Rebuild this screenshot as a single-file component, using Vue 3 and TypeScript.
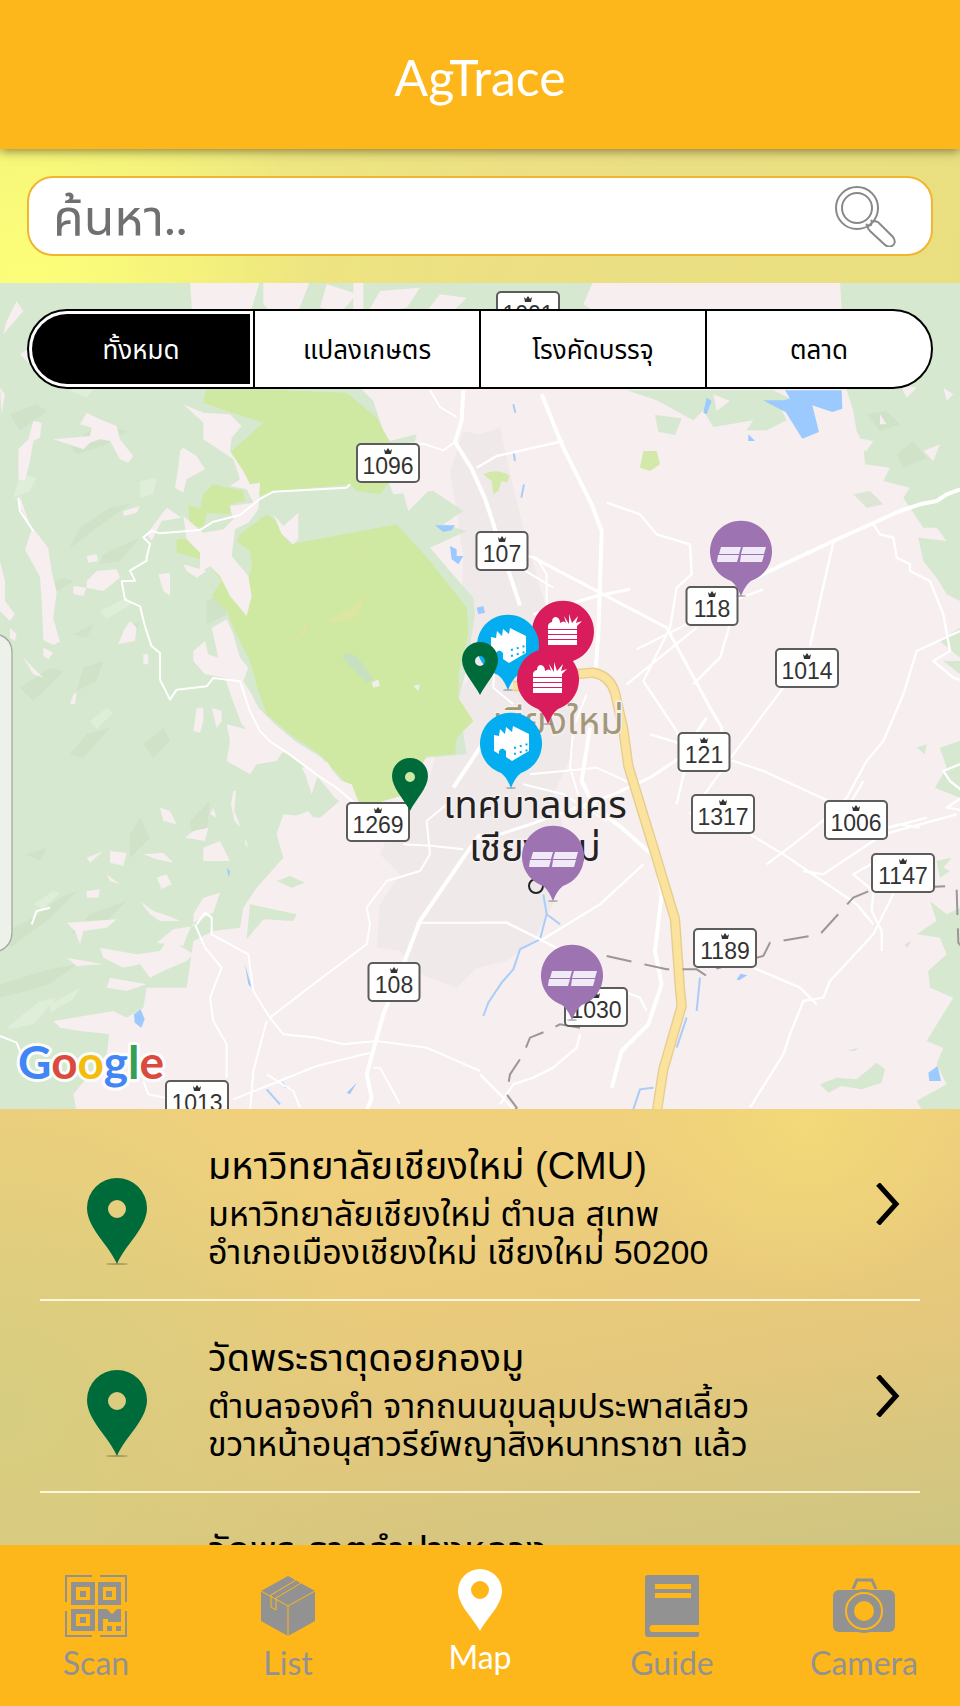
<script setup lang="ts">
import { ref } from 'vue'

type PinKind = 'market' | 'factory' | 'place' | 'farm'

interface Shield { code: string; x: number; y: number }
interface Pin { kind: PinKind; x: number; y: number }
interface Place { id: number; name: string; lines: string[] }

const query = ref('')
const filters = ['ทั้งหมด', 'แปลงเกษตร', 'โรงคัดบรรจุ', 'ตลาด']
const activeFilter = ref(filters[0])

const shields: Shield[] = [
  { code: '1001', x: 528, y: 310 },
  { code: '1096', x: 388, y: 462 },
  { code: '107', x: 502, y: 550 },
  { code: '118', x: 712, y: 605 },
  { code: '1014', x: 807, y: 667 },
  { code: '121', x: 704, y: 751 },
  { code: '1317', x: 723, y: 813 },
  { code: '1006', x: 856, y: 819 },
  { code: '1147', x: 903, y: 872 },
  { code: '1189', x: 725, y: 947 },
  { code: '1030', x: 596, y: 1006 },
  { code: '1269', x: 378, y: 821 },
  { code: '108', x: 394, y: 981 },
  { code: '1013', x: 197, y: 1099 },
]

const pins: Pin[] = [
  { kind: 'farm', x: 741, y: 551 },
  { kind: 'market', x: 563, y: 631 },
  { kind: 'factory', x: 508, y: 645 },
  { kind: 'place', x: 480, y: 660 },
  { kind: 'market', x: 548, y: 679 },
  { kind: 'factory', x: 511, y: 743 },
  { kind: 'place', x: 410, y: 776 },
  { kind: 'farm', x: 553, y: 856 },
  { kind: 'farm', x: 572, y: 975 },
]

const places: Place[] = [
  { id: 1, name: 'มหาวิทยาลัยเชียงใหม่ (CMU)', lines: ['มหาวิทยาลัยเชียงใหม่ ตำบล สุเทพ', 'อำเภอเมืองเชียงใหม่ เชียงใหม่ 50200'] },
  { id: 2, name: 'วัดพระธาตุดอยกองมู', lines: ['ตำบลจองคำ จากถนนขุนลุมประพาสเลี้ยว', 'ขวาหน้าอนุสาวรีย์พญาสิงหนาทราชา แล้ว'] },
  { id: 3, name: 'วัดพระธาตุลำปางหลวง', lines: [] },
]

const tabs = ['Scan', 'List', 'Map', 'Guide', 'Camera']
const activeTab = ref('Map')

const shieldWidth = (code: string) => (code.length === 4 ? 62 : 51)
</script>

<template>
  <div class="app">
    <header class="header"><h1>AgTrace</h1></header>

    <form class="search" @submit.prevent>
      <div class="search-box">
        <input v-model="query" type="text" placeholder="ค้นหา.." aria-label="ค้นหา" />
        <button type="submit" aria-label="ค้นหา">
          <svg viewBox="0 0 62 62" fill="none" stroke="#888" stroke-width="2">
            <circle cx="23" cy="23" r="21" />
            <circle cx="23" cy="23" r="15" />
            <path d="M34 41l3-1 1-3 3-1 3 1 15 15q4 6-1 9-4 2-8-2L36 46q-3-3-2-5zM34 41l-2-2M38 37l-1-2" />
          </svg>
        </button>
      </div>
    </form>

    <main class="map">
      <svg class="canvas" viewBox="0 282 960 826" preserveAspectRatio="xMidYMid slice" role="img" aria-label="แผนที่เชียงใหม่">
        <defs>
          <symbol id="balloon" viewBox="-31 -31 62 78" overflow="visible">
            <ellipse cx="0" cy="44" rx="5" ry="1" fill="#777" opacity=".5" />
            <path d="M0 44C-3 37-5 33-10 29A31 31 0 1 1 10 29C5 33 3 37 0 44z" />
          </symbol>
        </defs>
        <rect y="282" width="960" height="828" fill="#f6eeef" />
        <g transform="scale(.33333)">
          <!-- built-up area -->
          <path fill="#f0e9ea" d="M1390 1290l50 10 60-20 40 180 30 120 50 180 40 120 60 150 0 220-60 130 40 130-40 200-60 110-80 60-90 20-60 60-110-40-60-70-70-10 10-130 60-90-60-60 60-140 80-60 70-250 60-80-30-160 10-200-20-140-20-120z" />
          <!-- forest -->
          <path fill="#d6e8cf" d="M0 840H1060V1140L1120 1200 1150 1290 1170 1320 1250 1300 1240 1340 1150 1400 1180 1480 1300 1470 1390 1530 1330 1570 1400 1590 1290 1640 1350 1710 1420 1790 1425 1840 1400 2000 1375 2100 1400 2260 1280 2270 1080 2390 1030 2390 960 2450 850 2440 830 2500 850 2570 770 2660 730 2720 720 2780 640 2790 580 2820 560 2960 440 2960 430 3020 330 3080 320 3160 220 3280 230 3335H0z" />
          <path fill="#d6e8cf" d="M750 2710l140 30-10 20-90-5-50 60zM830 2640l40-15 45 20-40 15z" />
          <path fill="#d6e8cf" d="M1090 840h690l-30 70 60 40-110 40-610-20z" />
          <path fill="#d6e8cf" d="M1880 1168h440l60 30-40 20 20 40-60 30-60 0 20-30-120 20-30-50-30 30-110-60z" />
          <path fill="#d6e8cf" d="M1965 1242l80 10-20 50-50-10z" />
          <g transform="translate(1440 1140)" fill="#d6e8cf">
            <path d="M1080-300H1440V660L1400 640 1370 590 1330 540 1315 470 1400 480 1370 440 1330 440 1270 350 1290 320 1210 300 1230 260 1155 250 1150 190 1130 150 1120 90 1100 28z" />
            <path d="M1440 740l-60 40 60 50zM1440 840l-50 0 50 40z" />
          </g>
          <g transform="translate(1440 2220)" fill="#d6e8cf">
            <path d="M1440 0L1380 20 1400 80 1365 140 1440 170zM1440 500L1400 520 1350 480 1370 540 1310 580 1380 590 1400 640 1345 690 1350 740 1420 770 1340 900 1390 920 1370 970 1400 1030 1310 1080 1330 1115H1440zM1370 360l45-10-25 30 20 10-30 20zM1020 1030l50-20 60 5 60-50 25 20-10 40-60 20-60-10-40 20zM1310 20l30-10-5 30zM1275 610l20-10-15 20zM1100 930l35-10-10 10z" />
          </g>
          <!-- terrain shade -->
          <g fill="#cbdfc5" opacity=".6">
            <path d="M30 1240l80-30 30 20-80 60zM210 1330l90-60 80 20-60 40-90 30zM240 1580l90-60 60-10-100 70-80 60zM310 1660l110-50-60 70-60 10zM60 2060l90-60 40 10-90 90zM250 2000l60-20-20 60-60 30zM210 2260l50-60 70-20-80 90zM430 2230l60-50 20 40-50 50zM30 2840l110-80 90-90-50 20-80 60-80 40zM0 2990l150-40 80-60-80 15-150 45zM210 2800l60-60 110-40-60 60zM390 2500l30-50 30 60-60 60zM570 2460l60-60-10 90-40 30zM620 1800l50-20 10 60-60 30zM2600 1240l60-10 40 40-60 20zM2690 1360l50-40 40 50-70 30zM2560 1480l50-10 40 40-50 10zM130 1760l60-30 30 10-60 40zM360 1900l60-40-20 60zM80 2560l60-20-20 40zM220 1900l60-30-20 40z" />
          </g>
          <g fill="#e1efda" opacity=".8">
            <path d="M60 1420l50 10-20 40-50 20zM420 1440l50-10-10 50-40 10zM300 1830l80-40 20 15-80 50zM210 1170l40-30 60-10-50 60zM270 2160l50-40 20 15-50 50zM20 3080l100-80 50-10-70 80-70 15zM150 3010l90-50-20 35-70 40zM100 2710l60-40 20 5-50 50z" />
          </g>
          <!-- clearings -->
          <g fill="#f6eeef">
            <path d="M100 1260l25 5-5 45-20 10-10 60-15 60-20-5 0-90 30-30zM240 1270l20-35 40 20 50 20 10 40 40 50-15 20-25-10-30-55-30-5-30 10-20 20-90-30 110-10 5-25zM65 1487l-10 20 40 80-20 60 45 80 5 80 5 110 30 15 20-10-20-70 10-80-15-60-10-70-30-40-25-30-30-85zM260 1740l30-30 60-5 10 25-50 40-50-10zM540 1350l10-10 40 25 25 40-55 30-10 40-25-15 10-60zM475 1720l35-5v70l-20-15zM390 1860l20 20-5 40-50 10 15-40z" />
            <path d="M440 1600l60-80 45 30-60 10-30 60zM370 1530l50-15-10 20-40 10zM260 1665l30-5 5 20-30 5zM220 1755l40 5-10 25-30-5zM550 1690l70 20-30 20-30-20z" />
            <path d="M0 1680l15 60v60l30 40-15 20-30-30zM30 1880l20 20-5 20-15-10zM130 1940l30 15-15 20-15-10zM70 1970l60 60-30-10zM220 2080l10-5-5 35-15 0zM430 1960l15 0v30h-15z" />
            <path d="M480 2420l30 10 20 40-40-10zM580 2490l45-10-10 40-60-10zM610 2540l50-20 30 60-80 0zM700 2370l8 0-5 60 20 50-20-20-10-50zM260 2570l50-20-40 35zM330 2550l50 5-10 40-40-10zM430 2560l60-5 30 30-50-10zM320 2620l40 30-30-10zM470 2630l30-10 15 30-30 15zM260 2670l40-5-5 25-35 0zM420 2700l40 30 60 20 20 10-60 0-30-20zM580 2740l30-50 50-15-20 60-60 30-20 40-10 30-80-10 50-40 60-10zM200 2765l150-10-30 25-70 10-10 40-15-40zM300 2840l110 20 70-10 20-30 50 20 30 20-20 20-70 30-40 20-30-40-50 10-60-30zM200 2870l110 20-80 5zM330 2930l110 20-60 20-60-10zM160 3060l180-30 60 30-70 40-90-10-60-10zM845 2460l80-30 15 20-20 50-30 60 40-10 60-60 90-10v90l-210 30zM905 2300l80-20 10 30-40 10-20 60-20-60zM640 2420l10 30-20-10zM735 2510l10 30-10-10z" />
            <path d="M570 840h210l-30 99-80 50H580zM790 840h140l-30 79-50 50-60-60zM980 849l90 30-50 60-60-20zM1140 870l120-10-40 60-120 20zM1320 880l80 10-60 60-60-20zM20 960l30-60 20 30-60 70zM60 1060l60-40-20 80zM0 1160l15 20-10 60z" />
            <path d="M2400 1200l60-20-30 60zM2570 1310l50 10-20 30-40-10zM2490 1330l40 20-40 30zM2600 1420l50 20-30 20-50-10zM2700 1150l50 10-30 30zM2770 1350l50-20-20 50zM2140 1180l50 20-40 30zM2640 1240l20 30-20 0zM2830 1160l30 20-20 20z" />
          </g>
          <!-- parks -->
          <g transform="translate(0 1140)" fill="#cfe8a2">
            <path d="M610 65L620 20 1040 35 1130 110 1170 185 1170 300 1140 340 1070 330 1050 310 830 330 780 345 740 305 690 215 740 170 790 125 680 90z" />
            <path d="M610 340L640 310 730 330 735 360 690 370 690 400 620 395 610 440 570 435 565 370 600 385z" />
            <path d="M720 460L800 400 830 420 870 490 1190 430 1290 540 1400 680 1405 760 1375 880 1375 950 1420 1020 1370 1070 1365 1120 1280 1125 1220 1240 1080 1280 1060 1230 960 1120 870 1060 800 1000 775 930 750 840 700 740 680 690 635 645 665 600 620 540 530 515 530 475 580 475 700 560 740 605 755 560 750 510 710 480z" />
            <path fill="#d2e9aa" d="M1450 280q40-20 80 5l-10 20-15-5-10 30-15 10-5-40zM1930 210h40l10 40-30 20-30-10z" />
          </g>
          <g transform="translate(0 1140)" fill="#f6eeef">
            <path d="M550 70l60 25 80 5 35 35-30 35-5 40 40 60 20 40 30-5-5 80-30 40-40 20-10 80 50 60 10 60-15 60-50-60-30-60-30-30-30 20 0-60-40-40-10-70 60 50 60-10 30-30-10-40 70-10-20-40-50-10 30-20-20-60-60-40-30-20 0-50zM820 400l30 35 45-40v80l-15 15-35-30z" />
            <path d="M680 715l20 45 20 70 25 30-15 40 25 40 20 40 50 50 60 50 80 50 60 70 30 10 20 50 10 30-20 10-60-50-50-60-90-70-80-30-60-60-30-80-20-60-60-10-35-40 0-30 35-30 10 40 30 10 -20-90zM680 1030l80 20 60 30 30 30-20 30-60 10-20 30-70-40 10-60zM590 980l20 0 0 40-10 35-20-5zM635 980l30 10 0 30-15 20zM1205 320l80 10-60 60z" />
          </g>
          <path fill="#dbe6a0" d="M980 1860l70-40 50-40-30 70-60 15zM1070 1670l40-40-20 30zM885 1910l25-30 15-40-5 50-35 30z" />
          <path fill="#c7e0c0" d="M1030 1955l40 10 50 70-20 10-70-70z" />
          <path fill="#f0f0ea" d="M1115 2045l20-10 5 20-20 5zM1240 2055l20-5-5 20z" />
          <!-- water -->
          <g fill="#9ccaff">
            <path d="M2355 1168h170l2 55-30 10-60-20 20 80-50 20-50-80-40-20-27-15 60 0 20-5zM2120 1190l15 10-15 40-10-5zM2245 1300l20 20-20 0zM1305 1573l60 0-10 15-25 5zM1350 1635l20 10 0 20 20 0-15 25-20-15zM1430 1820l20-5 5 20-20 5zM402 3040l20-15 12 30-10 25-20-15zM2785 3215l28-20 10 45-35 0zM2210 2935l12-17 20 5-25 15zM680 2600l10 10-3 20zM735 2890l20 70-10-10zM845 3240l20 20-10 0zM1040 3275l30-30-20 35z" />
          </g>
          <path fill="none" stroke="#a9cdf8" stroke-width="6" d="M1630 2680l10 60-20 75-60 30-20 60-35 40-40 60-15 40M1640 2740l40 30M2100 2930l-10 100M2060 3050l-30 90M1960 3260l-40 5-20 60M1540 1210l6 25M1540 1350l5 30M1572 1450l-8 40M800 3265l40 45" />
          <!-- roads -->
          <g fill="none" stroke="#fff" stroke-linejoin="round">
            <path stroke-width="12" d="M1390 1168l-5 90-20 65 50 80 40 90 20 60 25 80 60 180M1625 1180l60 150 90 180 30 80-10 310-10 130M2880 1465l-40 15-30 20-50 10-60 20-200 90-340 160M1360 2360l80-120 40-60M1440 2500l-50 70-130 190-50 130-60 150-50 180 15 70-50 130M1770 2180l-25 160 40 80 80 60 90 80 20 60 10 60-20 170 20 100-40 120-80 80-30 110" />
            <path stroke-width="9" d="M1440 2520l150-50 250-90 110-50 90-60 80-120M1600 1670l400 210 130 240 35 60 0 60M1600 1840l190-55 100-20" />
            <path stroke-width="7" d="M1430 1400l60-35 200-45M1820 1505l100 35 50 60 100 30 5 90-45 40-20 120-80 160 100 150 30 90-30 130M2500 1625l-30 130-40 180M2590 2340l-70 120 110 30 150-40M2350 2060l-150 200-130 180M1950 2200l100 30 240 80 370 170 40-10 60 10M2190 1870l-30 100-80 80M2090 1880l-210 170M1910 1945l300-150 80-30M2870 2440l-220 60-180 120-60-10M1620 2820l180-110 130-120M2880 1890l-130 60-40 130-60 140-50 60-60 110-60 60-100 80-80 60M2630 2580l-70 40 60 50-5 60 30 60 0 60M2680 2680l-60 120-130 140-20 50-60 10-40 100-20 60-100 160M2250 2500l100 60 220 150 50 60M2260 2900l140 60 50 50M1440 2765h80l100 50 150 80M1440 3220l60 60 80 90M1840 2960l80 30 20 40M1740 3100l-10 40-70 60-60 30-60 20-40 60M2620 1570l20 30 40 10 10 60 40 20 0 20 60 30 40 100 20 110-50 30 60 50 60 20 20 60-20 100 60 40-150 60 20 30 50 40-60 40 60 10 130 20" />
            <path stroke-width="6" d="M1050 1450l-10 10-220 12-40 22-60 48-80 20-40 25-120 10-25-8-25 20 20 20-10 40 0 10-50 30 15 30-40 2 10 55 45 20 15 60 20 60 25 20 0 80 30 60 20-30 90-10 20-25 80 10 30 90 30 60 30 30 60 40 80 60 60 40 60 50M1230 1328l40 0 60 20 35-25M1290 1168l30 50 50 30M55 1490l5 40 40 60M0 3105l50 20 20 50M95 2770l15-40 40-10M430 3240l15 40 50 10M590 2770l25-35 20 15 0 50 110 60 15 110 50 80 130-100 160-120 10-60 -10-50 60-80 100-30 30-50-10-100 60-50M1210 2530l90 5 90 10M585 2770l30 70 50 60-35 90 10 70 40 70 0 100M1250 2765h190M810 3050l40 50 100 10 80 20 100-10 150 20 160 70M800 3060l-40 150-10 120M1110 3155l-160 40-250 100M1120 3200l20 0 60 110M800 3220l80 50 20 50M1760 2080l-40 100-10 120 30 100M1550 1660l60 10 30 50 0 130M1490 1900l-10 160 60 50M1590 2070l80 80M1590 2320l200-20 130 60M1570 2350l120 30 130 80M1560 1700l100 60" />
          </g>
          <!-- motorway -->
          <g fill="none" stroke-linejoin="round">
            <path stroke="#e4cd8d" stroke-width="31" d="M1540 2055h60l120-35 60-5q50 10 65 60l25 110 15 110 80 260 60 200 15 210 5 50-55 190-20 130" />
            <path stroke="#fbe29d" stroke-width="23" d="M1540 2055h60l120-35 60-5q50 10 65 60l25 110 15 110 80 260 60 200 15 210 5 50-55 190-20 130" />
          </g>
          <path fill="none" stroke="#9b9697" stroke-width="6" stroke-dasharray="76 40" d="M1820 2865l180 40 90 0 30 20 20-20 150-40 20-40 150-25 100-110 60-25 240-10 10 10 5 160 40 50M1740 3080l-60-10-40 20-50 20-20 50-40 60-10 60 30 40-20 40" />
          <path fill="#eef3ec" fill-opacity=".9" stroke="#a4aca2" stroke-width="4" d="M-6 1900q42 12 42 54v840q0 42-42 58z" />
        </g>

        <g class="map-label">
          <text class="province" x="558" y="733">เชียงใหม่</text>
          <text x="535" y="817">เทศบาลนคร</text>
          <text x="535" y="860">เชียงใหม่</text>
          <circle cx="536" cy="885" r="7" fill="#eee7e8" stroke="#222" stroke-width="2" />
        </g>

        <g v-for="s in shields" :key="s.code" :transform="`translate(${s.x} ${s.y})`">
          <rect :x="-shieldWidth(s.code) / 2" y="-19" :width="shieldWidth(s.code)" height="38" rx="4" fill="#fff" stroke="#5c5c5c" stroke-width="2" />
          <path d="M-4-14l2 2 2-3 2 3 2-2-1 5h-6z" fill="#333" />
          <text class="shield-code" y="11">{{ s.code }}</text>
        </g>

        <g v-for="(p, i) in pins" :key="i" :transform="`translate(${p.x} ${p.y})`">
          <template v-if="p.kind === 'place'">
            <path fill="#006b3a" fill-rule="evenodd" d="M0 34C-6 22-18 11-18-1a18 18 0 0 1 36 0C18 11 6 22 0 34zM0-5a5 5 0 1 0 0 10a5 5 0 0 0 0-10z" />
          </template>
          <template v-else-if="p.kind === 'farm'">
            <use href="#balloon" x="-31" y="-31" width="62" height="78" fill="#9e73b2" />
            <path fill="#efeaf6" d="M-20-5h20l-2 7h-20zM2-5h23l-2 7h-23zM-23 3h21l-2 7h-20zM0 3h23l-2 7h-22z" />
          </template>
          <template v-else-if="p.kind === 'factory'">
            <use href="#balloon" x="-31" y="-31" width="62" height="78" fill="#03adef" />
            <path fill="#fff" d="M-17-9l5 1 1-7 5 5 1-7 6 5 1-6 16 8v17L1 17l-6-4v-6q-4-5-7 0v3l-5-3z" />
            <path stroke="#03adef" stroke-width="2" stroke-dasharray="2 4" d="M3 4l14-4M3 10l14-4" />
          </template>
          <template v-else>
            <use href="#balloon" x="-31" y="-31" width="62" height="78" fill="#d91c5c" />
            <path fill="#fff" d="M-15-2h29v4h-29zM-15 3h29v4h-29zM-15 8h29v5h-29zM-15-3q-1-6 4-7 0-5 4-5 4 1 4 6 4-3 6 0l-2-7 5 8 0-10 3 9 6-7-2 7 6-2-5 5 0 3z" />
          </template>
        </g>

        <text class="google" x="18" y="1078"><tspan fill="#4285f4">G</tspan><tspan fill="#db4a3f">o</tspan><tspan fill="#f4bd0b">o</tspan><tspan fill="#4285f4">g</tspan><tspan fill="#34a053">l</tspan><tspan fill="#db4a3f">e</tspan></text>
      </svg>

      <div class="filters" role="group" aria-label="ประเภท">
        <button v-for="f in filters" :key="f" type="button" :aria-pressed="activeFilter === f" @click="activeFilter = f">
          <span>{{ f }}</span>
        </button>
      </div>
    </main>

    <ul class="places">
      <li v-for="p in places" :key="p.id">
        <a :href="`#place-${p.id}`">
          <svg class="place-pin" viewBox="0 0 62 90">
            <ellipse cx="31" cy="87" rx="11" ry="1" fill="#7c6c3e" opacity=".5" />
            <path fill="#006b3a" fill-rule="evenodd" d="M31 87C23 68 1 51 1 31a30 30 0 0 1 60 0C61 51 39 68 31 87zM31 23a9 9 0 1 0 0 18a9 9 0 0 0 0-18z" />
          </svg>
          <div class="place-text">
            <h2>{{ p.name }}</h2>
            <p v-for="line in p.lines" :key="line">{{ line }}</p>
          </div>
          <svg class="chevron" viewBox="0 0 24 42" fill="none" stroke="#000" stroke-width="5"><path d="M2 1l18 20L2 41" /></svg>
        </a>
      </li>
    </ul>

    <nav class="tabs">
      <button v-for="t in tabs" :key="t" type="button" :class="{ active: activeTab === t }" @click="activeTab = t">
        <svg v-if="t === 'Scan'" viewBox="0 0 62 62" fill="currentColor">
          <path fill="none" stroke="currentColor" stroke-width="2" d="M1 27V1h26M35 1h26v26M61 36v25H35M27 61H1V36" />
          <path fill-rule="evenodd" d="M6 7h24v23H6zm5 5v13h14V12zM33 7h23v23H33zm5 5v13h13V12zM6 34h24v22H6zm5 5v12h14V39z" />
          <path d="M15 16h6v6h-6zM41 16h6v6h-6zM15 42h6v6h-6zM33 34h9l5 5 5-5h4v13H43v-3h-5v12h-5zM42 51h5v5h-5zM51 51h5v5h-5z" />
        </svg>
        <svg v-else-if="t === 'List'" viewBox="0 0 62 62">
          <path fill="currentColor" d="M31 1l27 15v30L31 61 4 46V16z" />
          <path fill="none" stroke="#fdb71a" stroke-width="1" d="M4 16l27 15 27-15M31 31v30M39 5L14 20v12l5 3V23l25-15" />
        </svg>
        <svg v-else-if="t === 'Map'" viewBox="0 0 62 62">
          <path fill="currentColor" fill-rule="evenodd" d="M31 62C24 49 9 36 9 22a22 22 0 0 1 44 0c0 14-15 27-22 40zM31 12a9 9 0 1 0 0 18a9 9 0 0 0 0-18z" />
        </svg>
        <svg v-else-if="t === 'Guide'" viewBox="0 0 62 62">
          <path fill="currentColor" fill-rule="evenodd" d="M7 0h50q1 0 1 1v49H12a3 3 0 0 0 0 7h46v3q0 2-2 2H7q-3 0-3-3V3q0-3 3-3zm7 9v5h36V9zm0 9v5h36v-5z" />
        </svg>
        <svg v-else viewBox="0 0 62 62">
          <path fill="none" stroke="currentColor" stroke-width="3" d="M20 14l4-9h15l4 9" />
          <rect y="15" width="62" height="42" rx="6" fill="currentColor" />
          <circle cx="31" cy="36" r="22" fill="currentColor" />
          <circle cx="31" cy="36" r="18" fill="none" stroke="#fdb71a" stroke-width="2" />
          <circle cx="31" cy="36" r="10" fill="#fdb71a" />
        </svg>
        <span>{{ t }}</span>
      </button>
    </nav>
  </div>
</template>

<style>
body { margin: 0; }
</style>

<style scoped>
.app {
  --brand: #fdb71a;
  display: flex;
  flex-direction: column;
  height: 100vh;
  overflow: hidden;
  font-family: Lato, "Noto Sans Thai", "Noto Sans", sans-serif;
  color: #000;
}
button { font: inherit; border: 0; padding: 0; background: none; color: inherit; cursor: pointer; }
.header {
  position: relative;
  flex: none;
  height: 149px;
  display: flex;
  align-items: center;
  justify-content: center;
  background: var(--brand);
  box-shadow: 0 2px 10px rgba(90, 80, 30, .7);
  z-index: 1;
}
h1 { margin: 4px 0 0; font-size: 50px; line-height: 60px; font-weight: 400; color: #fff; }
.search {
  flex: none;
  padding: 27px;
  background:
    radial-gradient(circle at 3% 100%, #fdff78, transparent 30%),
    linear-gradient(100deg, #efee7c, #ecdf84 55%, #e9df80);
}
.search-box {
  display: flex;
  align-items: center;
  height: 76px;
  padding: 0 35px 0 24px;
  border: 2px solid #f1b52f;
  border-radius: 26px;
  background: #fff;
}
input {
  flex: 1;
  min-width: 0;
  height: 72px;
  padding: 0;
  border: 0;
  outline: 0;
  background: none;
  font: 50px/72px Lato, "Noto Sans Thai", sans-serif;
  color: #333;
}
input::placeholder { color: #707070; opacity: 1; }
.search-box svg { display: block; width: 62px; height: 62px; }
.map { position: relative; flex: none; aspect-ratio: 960 / 826; overflow: hidden; }
.canvas { display: block; width: 100%; height: 100%; }
.map-label { font-size: 38px; text-anchor: middle; fill: #222; stroke: #f6eeef; stroke-width: 3px; paint-order: stroke; }
.map-label circle { paint-order: normal; }
.map-label .province { fill: #a29879; }
.shield-code { font: 23px "Liberation Sans", Arial, sans-serif; text-anchor: middle; fill: #333; }
.google { font: 700 46px Lato, sans-serif; stroke: #fff; stroke-width: 6px; stroke-opacity: .9; stroke-linejoin: round; paint-order: stroke; }
.filters {
  position: absolute;
  top: 26px;
  left: 27px;
  right: 27px;
  display: flex;
  height: 76px;
  border: 2px solid #000;
  border-radius: 40px;
  background: #fff;
  overflow: hidden;
}
.filters button { flex: 1; display: flex; font-size: 26px; }
.filters button + button { border-left: 2px solid #000; }
.filters span { flex: 1; align-self: stretch; display: flex; align-items: center; justify-content: center; margin: 3px; padding-top: 4px; }
.filters button[aria-pressed="true"] span { background: #000; color: #fff; }
.filters button:first-child span { border-radius: 36px 0 0 36px; }
.filters button:last-child span { border-radius: 0 36px 36px 0; }
.places {
  flex: 1;
  min-height: 0;
  margin: 0;
  padding: 0 40px;
  overflow: hidden;
  list-style: none;
  background:
    radial-gradient(circle at 84% 3%, rgba(243, 218, 120, .9), transparent 20%),
    radial-gradient(circle at 0% 70%, #d6cd80, transparent 38%),
    linear-gradient(170deg, #f0d07c 20%, #e6c87c 60%, #cdc582);
  font-family: "Liberation Sans", "Noto Sans Thai", sans-serif;
}
.places li { border-bottom: 2px solid #fff6dc; }
.places a { display: flex; height: 190px; color: inherit; text-decoration: none; }
.place-pin { flex: none; width: 62px; height: 90px; margin: 68px 60px 0 46px; }
.place-text { flex: 1; min-width: 0; padding-top: 32px; white-space: nowrap; }
h2 { margin: 0 0 4px; font-size: 38px; line-height: 50px; font-weight: 400; }
p { margin: 0; font-size: 34px; line-height: 38px; }
.chevron { flex: none; width: 24px; height: 42px; margin: 74px 20px 0 0; }
.tabs { flex: none; display: flex; height: 161px; background: var(--brand); }
.tabs button {
  flex: 1;
  display: flex;
  flex-direction: column;
  align-items: center;
  gap: 8px;
  padding-top: 30px;
  font-size: 32px;
  line-height: 36px;
  color: #929292;
}
.tabs svg { width: 62px; height: 62px; flex: none; }
.tabs .active { padding-top: 24px; color: #fff; }
</style>
